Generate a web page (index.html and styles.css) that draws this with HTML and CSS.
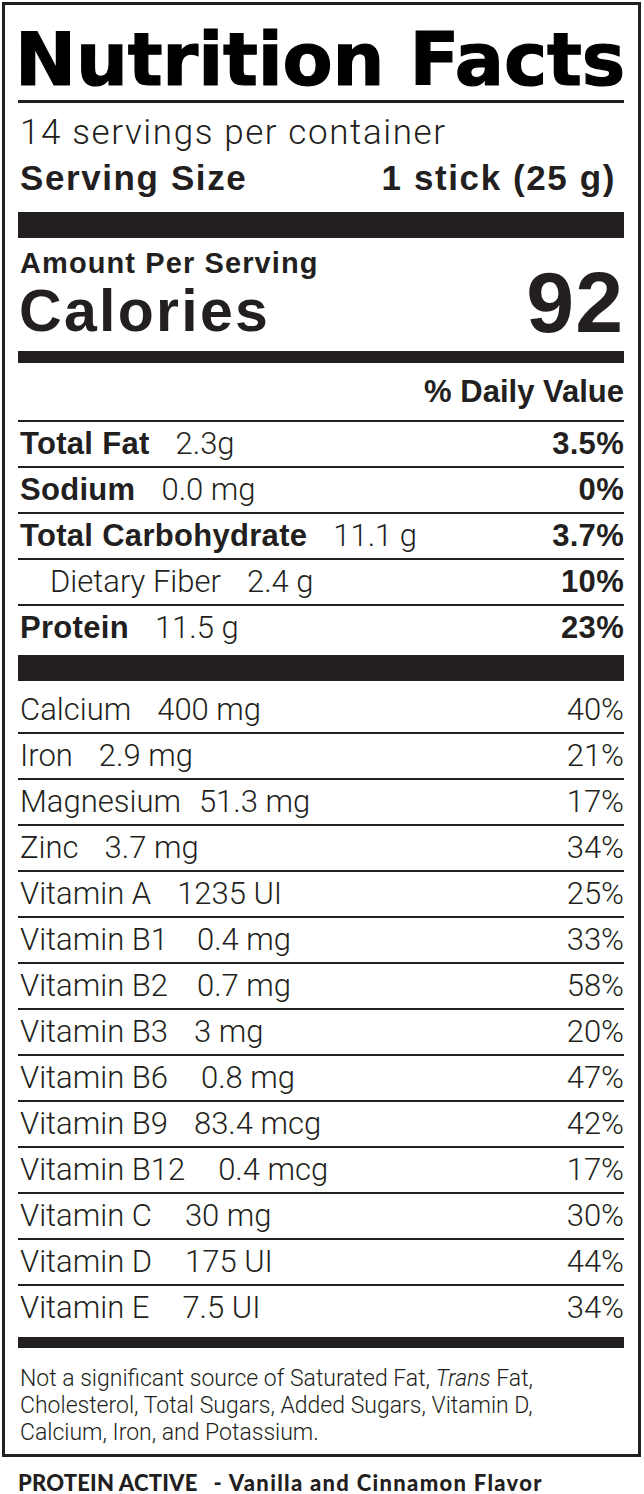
FILE: index.html
```html
<!DOCTYPE html>
<html lang="en">
<head>
<meta charset="utf-8">
<title>Nutrition Facts</title>
<link rel="stylesheet" href="styles.css">
</head>
<body>
<div class="label">
  <h1 class="title">Nutrition Facts</h1>
  <div class="servings">14 servings per container</div>
  <div class="serving-size"><span>Serving Size</span><span>1 stick (25 g)</span></div>
  <div class="bar bar-lg bar-top"></div>
  <div class="cal-block">
    <div class="cal-left">
      <div class="amount">Amount Per Serving</div>
      <div class="calories">Calories</div>
    </div>
    <div class="cal-num">92</div>
  </div>
  <div class="bar bar-md"></div>
  <div class="dv-head">% Daily Value</div>
  <div class="rows macros">
    <div class="row"><span class="name"><b>Total Fat</b><span class="val">2.3g</span></span><b class="pct">3.5%</b></div>
    <div class="row"><span class="name"><b>Sodium</b><span class="val">0.0 mg</span></span><b class="pct">0%</b></div>
    <div class="row"><span class="name"><b>Total Carbohydrate</b><span class="val">11.1 g</span></span><b class="pct">3.7%</b></div>
    <div class="row"><span class="name sub"><span>Dietary Fiber</span><span class="val">2.4 g</span></span><b class="pct">10%</b></div>
    <div class="row"><span class="name"><b>Protein</b><span class="val">11.5 g</span></span><b class="pct">23%</b></div>
  </div>
  <div class="bar bar-lg bar-mid"></div>
  <div class="rows vitamins">
    <div class="row"><span class="name"><span>Calcium</span><span class="val">400 mg</span></span><span class="pct">40%</span></div>
    <div class="row"><span class="name"><span>Iron</span><span class="val">2.9 mg</span></span><span class="pct">21%</span></div>
    <div class="row"><span class="name"><span>Magnesium</span><span class="val gap-s">51.3 mg</span></span><span class="pct">17%</span></div>
    <div class="row"><span class="name"><span>Zinc</span><span class="val">3.7 mg</span></span><span class="pct">34%</span></div>
    <div class="row"><span class="name"><span>Vitamin A</span><span class="val">1235 UI</span></span><span class="pct">25%</span></div>
    <div class="row"><span class="name"><span>Vitamin B1</span><span class="val gap-m">0.4 mg</span></span><span class="pct">33%</span></div>
    <div class="row"><span class="name"><span>Vitamin B2</span><span class="val gap-m">0.7 mg</span></span><span class="pct">58%</span></div>
    <div class="row"><span class="name"><span>Vitamin B3</span><span class="val">3 mg</span></span><span class="pct">20%</span></div>
    <div class="row"><span class="name"><span>Vitamin B6</span><span class="val gap-l">0.8 mg</span></span><span class="pct">47%</span></div>
    <div class="row"><span class="name"><span>Vitamin B9</span><span class="val">83.4 mcg</span></span><span class="pct">42%</span></div>
    <div class="row"><span class="name"><span>Vitamin B12</span><span class="val gap-l">0.4 mcg</span></span><span class="pct">17%</span></div>
    <div class="row"><span class="name"><span>Vitamin C</span><span class="val gap-l">30 mg</span></span><span class="pct">30%</span></div>
    <div class="row"><span class="name"><span>Vitamin D</span><span class="val gap-l">175 UI</span></span><span class="pct">44%</span></div>
    <div class="row"><span class="name"><span>Vitamin E</span><span class="val gap-l">7.5 UI</span></span><span class="pct">34%</span></div>
  </div>
  <div class="bar bar-sm"></div>
  <p class="footnote">Not a significant source of Saturated Fat, <i>Trans</i> Fat,<br>Cholesterol, Total Sugars, Added Sugars, Vitamin D,<br>Calcium, Iron, and Potassium.</p>
</div>
<div class="product"><span class="brand">PROTEIN ACTIVE</span><span class="flavor">- Vanilla and Cinnamon Flavor</span></div>
</body>
</html>
```

FILE: styles.css
```css
* { box-sizing: border-box; }

html, body {
  margin: 0;
  padding: 0;
  background: #fff;
}

body {
  width: 644px;
  height: 1494px;
  color: #231f20;
  font-family: "Liberation Sans", Arial, sans-serif;
  overflow: hidden;
}

.label {
  margin: 2px 3px 0 2px;
  border: 3px solid #231f20;
  padding: 0 14px 9px 13px;
  height: 1455px;
}

.title {
  margin: 0;
  padding-top: 15px;
  font-family: "DejaVu Sans", sans-serif;
  font-weight: 700;
  font-size: 73px;
  line-height: 80px;
  letter-spacing: -0.2px;
  color: #000;
  -webkit-text-stroke: 1.2px #000;
  border-bottom: 3px solid #231f20;
  text-indent: -3px;
  white-space: nowrap;
}

.servings {
  margin-top: 10px;
  font-family: "Roboto", "Liberation Sans", sans-serif;
  font-weight: 300;
  font-size: 35px;
  line-height: 40px;
  letter-spacing: 1.6px;
  padding-left: 2px;
}

.serving-size {
  margin-top: 5px;
  display: flex;
  justify-content: space-between;
  font-weight: 700;
  font-size: 35px;
  line-height: 40px;
  letter-spacing: 1.6px;
  padding: 0 8px 0 2px;
}

.bar { background: #231f20; }
.bar-lg { height: 26px; }
.bar-md { height: 12px; margin-top: 7px; }
.bar-sm { height: 11px; margin-top: 7px; }
.bar-top { margin-top: 14px; }
.bar-mid { margin-top: 5px; }

.cal-block {
  display: flex;
  justify-content: space-between;
  align-items: flex-end;
}

.amount {
  margin-top: 9px;
  font-weight: 700;
  font-size: 29px;
  line-height: 32px;
  letter-spacing: 1.1px;
  padding-left: 2px;
}

.calories {
  font-weight: 700;
  font-size: 59px;
  line-height: 65px;
  letter-spacing: 2.3px;
  padding-left: 1px;
}

.cal-num {
  font-weight: 700;
  font-size: 86px;
  line-height: 84px;
  letter-spacing: 1px;
}

.dv-head {
  margin: 11px 0 10px;
  text-align: right;
  font-weight: 700;
  font-size: 31px;
  line-height: 36px;
}

.rows { font-size: 31px; }

.row {
  display: flex;
  justify-content: space-between;
  align-items: center;
  height: 46px;
  line-height: 44px;
  border-top: 2px solid #231f20;
  padding-left: 2px;
}

.name b, .pct { font-weight: 700; }

.macros b { letter-spacing: 0.3px; }

.val, .name > span:first-child, .vitamins .pct {
  font-family: "Roboto", "Liberation Sans", sans-serif;
  font-weight: 300;
}

.val { margin-left: 26px; }
.val.gap-s { margin-left: 18px; }
.val.gap-m { margin-left: 29px; }
.val.gap-l { margin-left: 33px; }

.sub { padding-left: 30px; }

.vitamins .row:first-child {
  border-top: none;
  height: 44px;
  margin-top: 7px;
}

.footnote {
  margin: 17px 0 0;
  font-family: "Roboto", "Liberation Sans", sans-serif;
  font-weight: 300;
  font-size: 23px;
  line-height: 27px;
  padding-left: 2px;
}

.footnote i { font-style: italic; }

.product {
  display: flex;
  margin: 13px 0 0 18px;
  font-family: "Lato", "Liberation Sans", sans-serif;
  font-weight: 900;
  font-size: 22px;
  line-height: 26px;
  white-space: pre;
  color: #231f20;
}

.brand { letter-spacing: 0.2px; }

.flavor {
  margin-left: 16px;
  letter-spacing: 1.3px;
}
```
